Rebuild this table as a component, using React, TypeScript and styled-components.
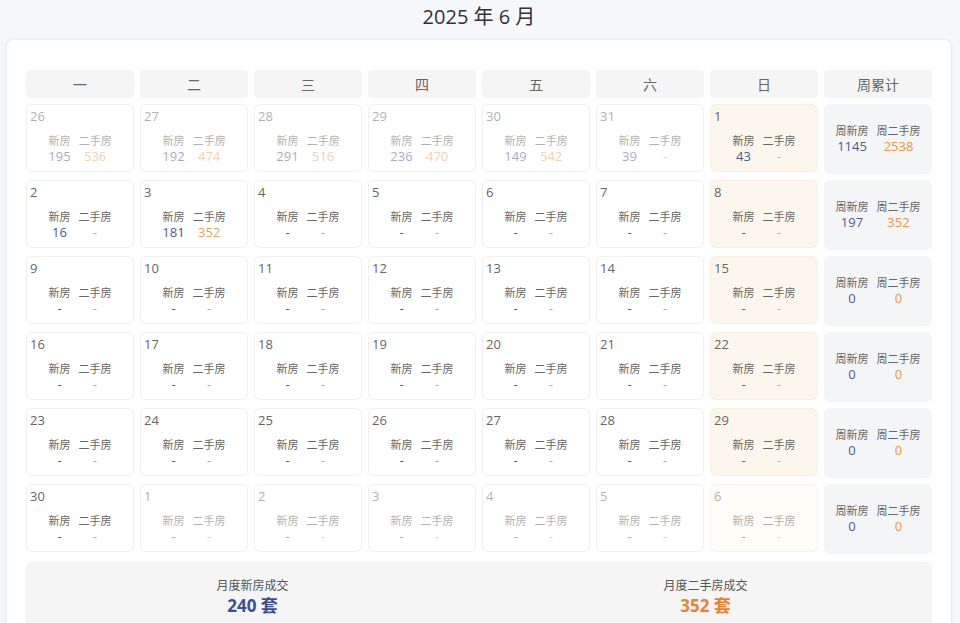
import React from "react";
import styled, { createGlobalStyle, css } from "styled-components";

const Global = createGlobalStyle`
  html, body { margin: 0; padding: 0; background: #f5f7fa; }
  body { font-family: "Open Sans", "Noto Sans CJK SC", sans-serif; color: #333; }
`;

const Page = styled.div`
  padding: 0 8px 20px 6px;
`;

const Title = styled.h1`
  margin: 0;
  height: 39px;
  line-height: 34px;
  text-align: center;
  font-size: 20px;
  font-weight: 400;
  color: #333;
`;

const Card = styled.div`
  background: #fff;
  border: 1px solid #e9ecf0;
  border-radius: 8px;
  box-shadow: 0 1px 4px rgba(0, 0, 0, 0.04);
  padding: 30px 19px 20px 19px;
`;

const Grid = styled.div`
  display: grid;
  grid-template-columns: repeat(8, 1fr);
  grid-template-rows: 28px;
  grid-auto-rows: 70px;
  column-gap: 6px;
  row-gap: 6px;
`;

const HeadCell = styled.div`
  background: #f5f5f5;
  border-radius: 4px;
  display: flex;
  align-items: center;
  justify-content: center;
  font-size: 14px;
  color: #666;
  font-family: "Noto Sans CJK SC", sans-serif;
`;

const DayCell = styled.div<{ $sunday?: boolean; $other?: boolean }>`
  align-self: start;
  height: 68px;
  box-sizing: border-box;
  border: 1px solid #efefef;
  border-radius: 6px;
  background: #fff;
  display: flex;
  flex-direction: column;
  ${(p) =>
    p.$sunday &&
    css`
      background: ${p.$other ? "#fffbf6" : "#fdf6ec"};
      border-color: ${p.$other ? "#f8f1e8" : "#f6ecdf"};
    `}
`;

const DayInner = styled.div<{ $other?: boolean }>`
  display: flex;
  flex-direction: column;
  opacity: ${(p) => (p.$other ? 0.5 : 1)};
`;

const DateNum = styled.div`
  font-size: 13px;
  line-height: 18px;
  color: #666;
  padding: 2px 0 0 3px;
`;

const Stats = styled.div<{ $top?: number }>`
  display: flex;
  justify-content: center;
  gap: 8px;
  margin-top: ${(p) => p.$top ?? 7}px;
`;

const Stat = styled.div`
  display: flex;
  flex-direction: column;
  align-items: center;
`;

const Label = styled.span`
  font-family: "Noto Sans CJK SC", sans-serif;
  font-size: 11px;
  line-height: 16px;
  color: #666;
`;

const Value = styled.span<{ $kind: "new" | "old" }>`
  font-size: 13px;
  line-height: 16px;
  color: ${(p) => (p.$kind === "new" ? "#4d5b8e" : "#e6a45f")};
`;

const WeekCell = styled.div`
  background: #f4f5f7;
  border-radius: 6px;
  display: flex;
  align-items: center;
  justify-content: center;
  padding-bottom: 3px;
`;

const WeekValue = styled(Value)`
  color: ${(p) => (p.$kind === "new" ? "#4d5b8e" : "#e8964a")};
`;

const Summary = styled.div`
  margin-top: 8px;
  background: #f5f5f5;
  border-radius: 6px;
  display: grid;
  grid-template-columns: 1fr 1fr;
  padding: 14px 0 16px;
`;

const SumItem = styled.div`
  display: flex;
  flex-direction: column;
  align-items: center;
`;

const SumLabel = styled.span`
  font-family: "Noto Sans CJK SC", sans-serif;
  font-size: 12px;
  line-height: 18px;
  color: #555;
`;

const SumValue = styled.span<{ $kind: "new" | "old" }>`
  font-family: "Open Sans", "Noto Sans CJK SC", sans-serif;
  font-size: 17px;
  line-height: 24px;
  font-weight: 700;
  color: ${(p) => (p.$kind === "new" ? "#3d4e96" : "#e8832c")};
`;

type Day = { d: number; n: string; o: string; other?: boolean };
type Week = { days: Day[]; wn: string; wo: string };

const dash = "-";
const mk = (d: number, n = dash, o = dash, other = false): Day => ({ d, n, o, other });

const weeks: Week[] = [
  {
    days: [
      mk(26, "195", "536", true),
      mk(27, "192", "474", true),
      mk(28, "291", "516", true),
      mk(29, "236", "470", true),
      mk(30, "149", "542", true),
      mk(31, "39", dash, true),
      mk(1, "43"),
    ],
    wn: "1145",
    wo: "2538",
  },
  {
    days: [mk(2, "16"), mk(3, "181", "352"), mk(4), mk(5), mk(6), mk(7), mk(8)],
    wn: "197",
    wo: "352",
  },
  { days: [9, 10, 11, 12, 13, 14, 15].map((d) => mk(d)), wn: "0", wo: "0" },
  { days: [16, 17, 18, 19, 20, 21, 22].map((d) => mk(d)), wn: "0", wo: "0" },
  { days: [23, 24, 25, 26, 27, 28, 29].map((d) => mk(d)), wn: "0", wo: "0" },
  {
    days: [mk(30), ...[1, 2, 3, 4, 5, 6].map((d) => mk(d, dash, dash, true))],
    wn: "0",
    wo: "0",
  },
];

const heads = ["一", "二", "三", "四", "五", "六", "日", "周累计"];

export default function App() {
  return (
    <Page>
      <Global />
      <Title>2025 年 6 月</Title>
      <Card>
        <Grid>
          {heads.map((h) => (
            <HeadCell key={h}>{h}</HeadCell>
          ))}
          {weeks.map((w, wi) => (
            <React.Fragment key={wi}>
              {w.days.map((day, di) => (
                <DayCell key={di} $sunday={di === 6} $other={day.other}>
                  <DayInner $other={day.other}>
                    <DateNum>{day.d}</DateNum>
                    <Stats>
                      <Stat>
                        <Label>新房</Label>
                        <Value $kind="new">{day.n}</Value>
                      </Stat>
                      <Stat>
                        <Label>二手房</Label>
                        <Value $kind="old">{day.o}</Value>
                      </Stat>
                    </Stats>
                  </DayInner>
                </DayCell>
              ))}
              <WeekCell>
                <Stats $top={0}>
                  <Stat>
                    <Label>周新房</Label>
                    <WeekValue $kind="new">{w.wn}</WeekValue>
                  </Stat>
                  <Stat>
                    <Label>周二手房</Label>
                    <WeekValue $kind="old">{w.wo}</WeekValue>
                  </Stat>
                </Stats>
              </WeekCell>
            </React.Fragment>
          ))}
        </Grid>
        <Summary>
          <SumItem>
            <SumLabel>月度新房成交</SumLabel>
            <SumValue $kind="new">240 套</SumValue>
          </SumItem>
          <SumItem>
            <SumLabel>月度二手房成交</SumLabel>
            <SumValue $kind="old">352 套</SumValue>
          </SumItem>
        </Summary>
      </Card>
    </Page>
  );
}
